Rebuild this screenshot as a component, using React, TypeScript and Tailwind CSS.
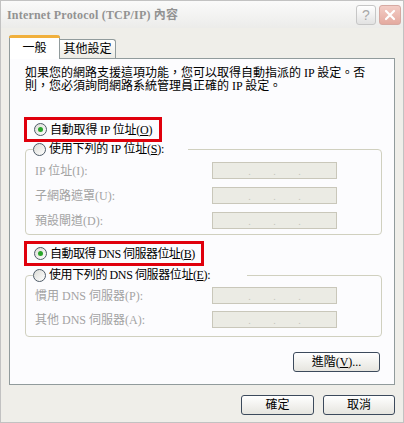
import React from "react";

const font = { fontFamily: '"Liberation Serif", "Noto Sans CJK TC", serif' };

const Radio = ({ checked }: { checked?: boolean }) => (
  <span className="w-[13px] h-[13px] shrink-0 rounded-full border border-[#4e5b68] bg-gradient-to-br from-[#dcdcd6] to-white flex items-center justify-center">
    {checked && <span className="w-[5px] h-[5px] rounded-full bg-[#2aa52a]" />}
  </span>
);

const IpInput = () => (
  <div className="w-[125px] h-[17px] border border-[#c9c7ba] bg-[#ebebe4] flex items-end justify-around px-[24px] pb-[1px] text-[10px] leading-[10px] text-[#c4c4bc]">
    <span>.</span>
    <span>.</span>
    <span>.</span>
  </div>
);

const Row = ({ label }: { label: string }) => (
  <div className="h-[17px] flex items-center">
    <span className="w-[177px] text-[12px] leading-[14px] text-[#a3a3a3]">{label}</span>
    <IpInput />
  </div>
);

const XpButton = ({ children, className }: { children: React.ReactNode; className?: string }) => (
  <button className={"h-[20px] rounded-[3px] border border-[#3c4a5c] bg-gradient-to-b from-white to-[#e6e5df] text-[12px] leading-[14px] text-black " + (className ?? "")}>
    {children}
  </button>
);

export default function App() {
  return (
    <div className="w-[404px] h-[423px] flex flex-col bg-[#efeee9] border border-[#c2c2c2] overflow-hidden" style={font}>
      {/* Title bar */}
      <div className="h-[27px] flex items-center pl-[6px] pr-[2px] bg-gradient-to-b from-[#fafafa] to-[#ececea]">
        <span className="text-[12px] font-bold text-[#929292] tracking-[0.2px]">Internet Protocol (TCP/IP) 內容</span>
        <div className="ml-auto flex gap-[3px]">
          <div className="w-[20px] h-[20px] rounded-[3px] border border-[#c6c6c6] bg-gradient-to-b from-white to-[#e2e2e2] flex items-center justify-center text-[14px] leading-none text-[#a8a8a8]" style={{ fontFamily: '"Liberation Sans", sans-serif' }}>
            ?
          </div>
          <div className="w-[22px] h-[20px] rounded-[3px] border border-[#d6a9a2] bg-gradient-to-b from-[#f3cdc6] to-[#e4aaa0] flex items-center justify-center">
            <svg width="12" height="12" viewBox="0 0 12 12">
              <path d="M2 2 L10 10 M10 2 L2 10" stroke="#ffffff" strokeWidth="2.2" strokeLinecap="round" />
            </svg>
          </div>
        </div>
      </div>

      {/* Tabs */}
      <div className="mt-[7px] pl-[8px] flex items-end h-[23px]">
        <div className="relative z-10 -mb-px w-[51px] h-[24px] bg-white border border-[#919b9c] border-b-0 border-t-0 rounded-t-[3px] flex flex-col">
          <div className="h-[3px] rounded-t-[3px] bg-[#f1b03c] -mx-px" />
          <div className="flex-1 flex items-center justify-center text-[12px] leading-[14px] pb-[2px]">一般</div>
        </div>
        <div className="w-[56px] h-[19px] bg-gradient-to-b from-white to-[#ecebe5] border border-[#919b9c] border-b-0 border-l-0 rounded-tr-[3px] flex items-center justify-center text-[12px] leading-[14px]">
          其他設定
        </div>
      </div>

      {/* Panel */}
      <div className="mx-[8px] h-[327px] bg-[#fcfcfe] border border-[#919b9c] pl-[14px] flex flex-col">
        <p className="mt-[8px] ml-[1px] text-[12px] leading-[13px] text-black">
          如果您的網路支援這項功能，您可以取得自動指派的 IP 設定。否
          <br />
          則，您必須詢問網路系統管理員正確的 IP 設定。
        </p>

        <div className="mt-[24px] w-[138px] h-[25px] border-[3px] border-[#e0000c] flex items-center gap-[3px] pl-[7px]">
          <Radio checked />
          <span className="text-[12px] leading-[14px] tracking-[-0.2px]">自動取得 IP 位址(<u>O</u>)</span>
        </div>

        <fieldset className="ml-[1px] w-[357px] border border-[#d0d0bf] rounded-[4px] pb-[5px]">
          <legend className="ml-[7px] p-0">
            <div className="w-[155px] h-[14px] flex items-center gap-[3px]">
              <Radio />
              <span className="text-[12px] leading-[14px] tracking-[-0.2px]">使用下列的 IP 位址(<u>S</u>):</span>
            </div>
          </legend>
          <div className="pt-[6px] pl-[9px] flex flex-col gap-[8px]">
            <Row label="IP 位址(I):" />
            <Row label="子網路遮罩(U):" />
            <Row label="預設閘道(D):" />
          </div>
        </fieldset>

        <div className="mt-[6px] w-[180px] h-[25px] border-[3px] border-[#e0000c] flex items-center gap-[3px] pl-[7px]">
          <Radio checked />
          <span className="text-[12px] leading-[14px] whitespace-nowrap tracking-[-0.55px]">自動取得 DNS 伺服器位址(<u>B</u>)</span>
        </div>

        <fieldset className="mt-[2px] ml-[1px] w-[357px] border border-[#d0d0bf] rounded-[4px] pb-[8px]">
          <legend className="ml-[7px] p-0">
            <div className="w-[214px] h-[14px] flex items-center gap-[3px]">
              <Radio />
              <span className="text-[12px] leading-[14px] whitespace-nowrap tracking-[-0.4px]">使用下列的 DNS 伺服器位址(<u>E</u>):</span>
            </div>
          </legend>
          <div className="pt-[5px] pl-[9px] flex flex-col gap-[7px]">
            <Row label="慣用 DNS 伺服器(P):" />
            <Row label="其他 DNS 伺服器(A):" />
          </div>
        </fieldset>

        <div className="mt-[15px] flex justify-end pr-[14px]">
          <XpButton className="w-[87px]">
            進階(<u>V</u>)...
          </XpButton>
        </div>
      </div>

      {/* Dialog buttons */}
      <div className="mt-[10px] flex justify-end gap-[9px] pr-[8px]">
        <XpButton className="w-[73px]">確定</XpButton>
        <XpButton className="w-[72px]">取消</XpButton>
      </div>
    </div>
  );
}
